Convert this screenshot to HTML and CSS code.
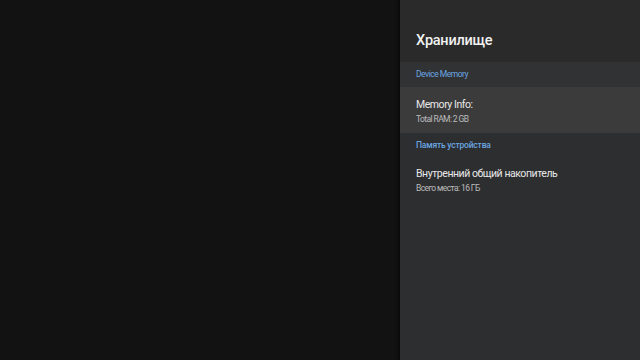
FILE: index.html
```html
<!DOCTYPE html>
<html lang="ru">
<head>
  <meta charset="UTF-8">
  <title>Хранилище</title>
  <link rel="stylesheet" href="styles.css">
</head>
<body>
  <!-- Пустая область слева -->
  <div class="backdrop"></div>

  <!-- Боковая панель настроек -->
  <div class="panel">
    <div class="panel-title">Хранилище</div>

    <div class="section-head section-first">Device Memory</div>
    <div class="item item-focused">
      <div class="item-title">Memory Info:</div>
      <div class="item-sub">Total RAM: 2 GB</div>
    </div>

    <div class="section-head section-bold">Память устройства</div>
    <div class="item">
      <div class="item-title">Внутренний общий накопитель</div>
      <div class="item-sub">Всего места: 16 ГБ</div>
    </div>
  </div>
</body>
</html>
```

FILE: styles.css
```css
html, body {
  height: 100%;
}

body {
  margin: 0;
  overflow: hidden;
  background-color: #121212;
  font-family: Roboto, "Noto Sans", sans-serif;
  display: flex;
}

.backdrop {
  flex: 1;
}

.panel {
  width: 240px;
  background-color: #2d2e30;
  box-shadow: -2px 0 3px rgba(0, 0, 0, 0.5);
}

.panel-title {
  height: 62px;
  box-sizing: border-box;
  padding: 32px 16px 0;
  font-size: 14.5px;
  font-weight: 500;
  letter-spacing: -0.25px;
  color: #f1f1f1;
  background-color: #2a2a2b;
}

.section-head {
  padding: 0 16px;
  font-size: 8.5px;
  color: #6aa6e0;
  letter-spacing: -0.5px;
}

.section-first {
  height: 25px;
  line-height: 25px;
  background-color: #313234;
}

.section-bold {
  height: 25px;
  line-height: 25px;
  font-weight: 500;
  letter-spacing: -0.2px;
}

.item {
  padding: 8px 16px 10px;
}

.item-focused {
  padding: 10px 16px 8px;
  background-color: #3b3b3c;
}

.item-title {
  font-size: 10.5px;
  color: #e8e8e8;
  line-height: 16px;
  letter-spacing: -0.45px;
}

.item-sub {
  font-size: 8.5px;
  color: #bcbcbc;
  line-height: 12px;
  letter-spacing: -0.6px;
}
```
